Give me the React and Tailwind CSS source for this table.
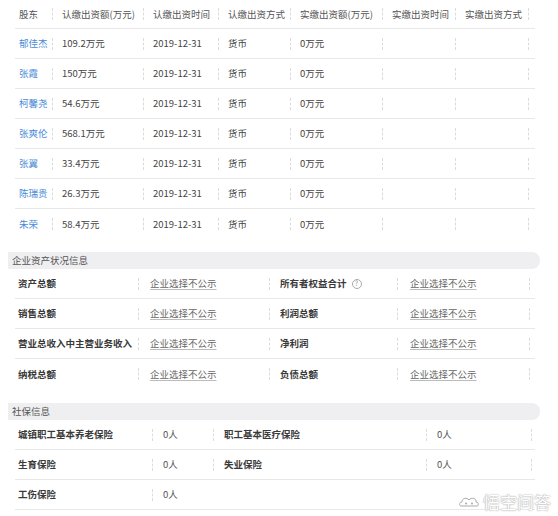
import React from "react";

const font = { fontFamily: '"Noto Sans CJK SC", "Noto Sans", sans-serif' };

function Sep() {
  return <div className="h-[12px] w-0 shrink-0 border-l border-dashed border-[#dcdcdc]" />;
}

const shareholders = [
  ["郁佳杰", "109.2万元"],
  ["张霞", "150万元"],
  ["柯馨尧", "54.6万元"],
  ["张爽伦", "568.1万元"],
  ["张翼", "33.4万元"],
  ["陈瑞贵", "26.3万元"],
  ["朱荣", "58.4万元"],
];

const colW = [37, 91, 75, 72, 92, 73, 73];

function Cell({ w, children, first, cls = "" }) {
  return (
    <div className="flex items-center shrink-0" style={{ width: w }}>
      {!first && <Sep />}
      <div className={`${first ? "pl-[4px]" : "pl-[9px]"} whitespace-nowrap ${cls}`}>{children}</div>
    </div>
  );
}

function Help() {
  return (
    <span className="ml-[5px] inline-flex h-[10px] w-[10px] items-center justify-center rounded-full border border-[#aaa] text-[7px] font-normal leading-none text-[#999]">
      ?
    </span>
  );
}

function Header({ title }) {
  return (
    <div className="ml-[8px] flex h-[17px] w-[532px] items-center rounded-r-[8px] bg-[#efeff1] pl-[4px] text-[9.5px] text-[#555]">
      {title}
    </div>
  );
}

function AssetRow({ a, b, last }) {
  return (
    <div className={`ml-[15px] flex h-[30px] w-[520px] items-center ${last ? "" : "border-b border-[#e8e8e8]"}`}>
      <div className="w-[123px] shrink-0 pl-[3px] font-bold text-[#3a3a3a]">{a[0]}</div>
      <Sep />
      <div className="w-[130px] shrink-0 pl-[11px] text-[#666] underline decoration-[#bbb] underline-offset-2">{a[1]}</div>
      <Sep />
      <div className="flex w-[127px] shrink-0 items-center pl-[10px] font-bold text-[#3a3a3a]">
        {b[0]}
        {b[2] && <Help />}
      </div>
      <Sep />
      <div className="w-[131px] shrink-0 pl-[12px] text-[#666] underline decoration-[#bbb] underline-offset-2">{b[1]}</div>
      <Sep />
    </div>
  );
}

export default function App() {
  return (
    <div className="relative h-[516px] w-[558px] overflow-hidden bg-white text-[9.5px] text-[#444]" style={font}>
      {/* shareholder table */}
      <div className="ml-[15px] flex h-[29px] w-[520px] items-center border-b border-[#e8e8e8] text-[#555]">
        {["股东", "认缴出资额(万元)", "认缴出资时间", "认缴出资方式", "实缴出资额(万元)", "实缴出资时间", "实缴出资方式"].map((t, i) => (
          <Cell key={i} w={colW[i]} first={i === 0}>
            {t}
          </Cell>
        ))}
        <Sep />
      </div>
      {shareholders.map(([n, v], r) => (
        <div
          key={r}
          className={`ml-[15px] flex h-[30px] w-[520px] items-center ${r === shareholders.length - 1 ? "" : "border-b border-[#e8e8e8]"}`}
        >
          <Cell w={colW[0]} first cls="text-[#4a8ad6]">
            {n}
          </Cell>
          <Cell w={colW[1]}>{v}</Cell>
          <Cell w={colW[2]}>2019-12-31</Cell>
          <Cell w={colW[3]}>货币</Cell>
          <Cell w={colW[4]}>0万元</Cell>
          <Cell w={colW[5]}></Cell>
          <Cell w={colW[6]}></Cell>
          <Sep />
        </div>
      ))}

      <div className="h-[13px]" />
      <Header title="企业资产状况信息" />
      <AssetRow a={["资产总额", "企业选择不公示"]} b={["所有者权益合计", "企业选择不公示", true]} />
      <AssetRow a={["销售总额", "企业选择不公示"]} b={["利润总额", "企业选择不公示"]} />
      <AssetRow a={["营业总收入中主营业务收入", "企业选择不公示"]} b={["净利润", "企业选择不公示"]} />
      <AssetRow a={["纳税总额", "企业选择不公示"]} b={["负债总额", "企业选择不公示"]} last />

      <div className="h-[14px]" />
      <Header title="社保信息" />
      {[
        ["城镇职工基本养老保险", "0人", "职工基本医疗保险", "0人"],
        ["生育保险", "0人", "失业保险", "0人"],
        ["工伤保险", "0人"],
      ].map((r, i) => (
        <div key={i} className="ml-[15px] flex h-[30px] w-[520px] items-center border-b border-[#e8e8e8]">
          <div className="w-[137px] shrink-0 pl-[3px] font-bold text-[#3a3a3a]">{r[0]}</div>
          <Sep />
          <div className="w-[60px] shrink-0 pl-[10px] text-[#555]">{r[1]}</div>
          {r[2] && (
            <>
              <Sep />
              <div className="w-[212px] shrink-0 pl-[10px] font-bold text-[#3a3a3a]">{r[2]}</div>
              <Sep />
              <div className="w-[104px] shrink-0 pl-[10px] text-[#555]">{r[3]}</div>
              <Sep />
            </>
          )}
        </div>
      ))}

      {/* watermark */}
      <div className="absolute left-[458px] top-[489px] flex items-center gap-[3px] text-[17px] text-white" style={{ textShadow: "0 0 1px #999, 0 0 2px #bbb" }}>
        <svg width="22" height="16" viewBox="0 0 22 16">
          <path d="M3 12 C1 12 1 8 4 8 C4 4 9 3 11 6 C13 3 19 4 18 8 C21 8 21 12 19 12 Z" fill="#fff" stroke="#aaa" strokeWidth="1" />
          <circle cx="8" cy="9.5" r="1" fill="#aaa" />
          <circle cx="14" cy="9.5" r="1" fill="#aaa" />
        </svg>
        <span style={{ fontFamily: '"Noto Sans CJK SC", sans-serif' }}>悟空问答</span>
      </div>
    </div>
  );
}
